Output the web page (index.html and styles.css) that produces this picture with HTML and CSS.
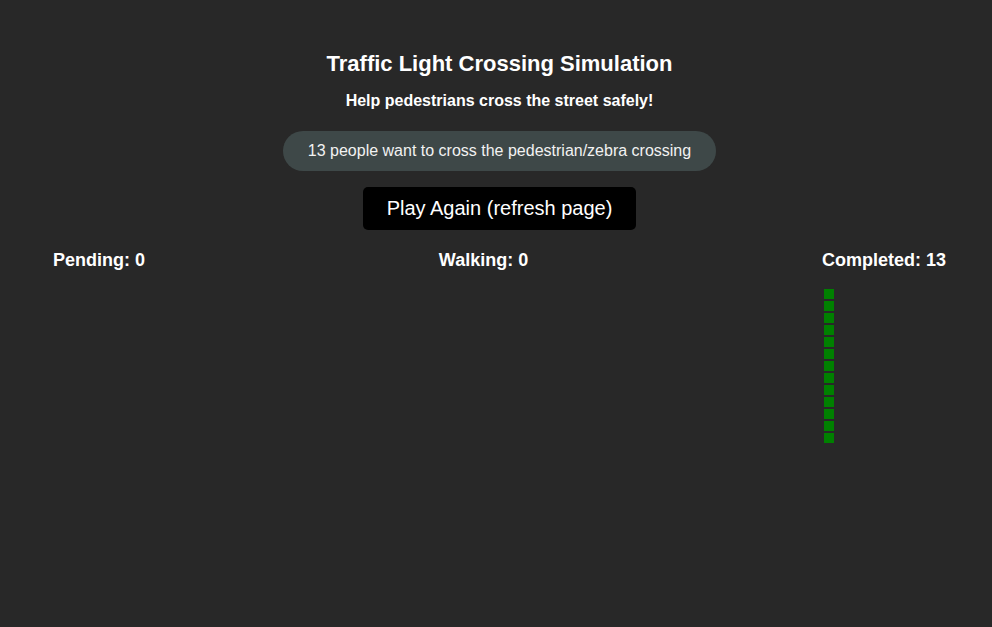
FILE: index.html
```html
<!DOCTYPE html>
<html>
<head>
<meta charset="utf-8">
<link rel="stylesheet" href="styles.css">
</head>
<body>
<div class="app">
  <h1 class="title">Traffic Light Crossing Simulation</h1>
  <p class="subtitle">Help pedestrians cross the street safely!</p>
  <div class="pill">13 people want to cross the pedestrian/zebra crossing</div>
  <button class="btn">Play Again (refresh page)</button>
  <div class="stats">
    <div class="col">
      <div class="label">Pending: 0</div>
    </div>
    <div class="col">
      <div class="label">Walking: 0</div>
    </div>
    <div class="col">
      <div class="label">Completed: 13</div>
      <div class="people">
        <span class="p"></span><span class="p"></span><span class="p"></span><span class="p"></span><span class="p"></span><span class="p"></span><span class="p"></span><span class="p"></span><span class="p"></span><span class="p"></span><span class="p"></span><span class="p"></span><span class="p"></span>
      </div>
    </div>
  </div>
</div>
</body>
</html>
```
FILE: styles.css
```css
html, body {
  margin: 0;
  padding: 0;
  background: #282828;
  color: #ffffff;
  font-family: "Liberation Sans", Arial, sans-serif;
  height: 100%;
}
.app {
  display: flex;
  flex-direction: column;
  align-items: center;
  padding-top: 49px;
  padding-left: 7px;
}
.title {
  margin: 0;
  font-size: 22px;
  font-weight: bold;
  line-height: 30px;
}
.subtitle {
  margin: 13px 0 0;
  font-size: 16px;
  font-weight: bold;
  line-height: 18px;
}
.pill {
  margin-top: 21px;
  background: #3e4848;
  border-radius: 20px;
  height: 40px;
  padding: 0 25px;
  display: flex;
  align-items: center;
  font-size: 16px;
  color: #f2f2f2;
}
.btn {
  margin-top: 16px;
  background: #000;
  color: #fff;
  border: none;
  border-radius: 5px;
  height: 43px;
  padding: 0 24px;
  font-family: "Liberation Sans", Arial, sans-serif;
  font-size: 20px;
}
.stats {
  align-self: stretch;
  display: flex;
  justify-content: space-between;
  padding: 0 46px 0 46px;
  margin-top: 20px;
}
.label {
  font-size: 18px;
  font-weight: bold;
  line-height: 21px;
}
.people {
  display: flex;
  flex-direction: column;
  gap: 2px;
  margin-top: 18px;
  padding-left: 2px;
}
.p {
  width: 10px;
  height: 10px;
  background: #008000;
}
```
